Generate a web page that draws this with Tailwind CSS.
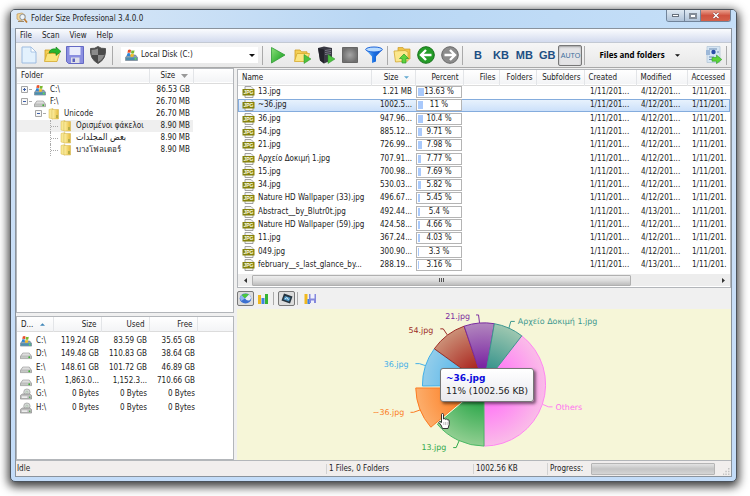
<!DOCTYPE html>
<html lang="en">
  <head>
    <meta charset="utf-8" />
<meta name="viewport" content="width=device-width, initial-scale=1" />
<title>Folder Size Professional 3.4.0.0</title>
<script src="https://cdn.jsdelivr.net/npm/@tailwindcss/browser@4"></script>
  </head>
  <body class="bg-white font-['DejaVu_Sans_Condensed','DejaVu_Sans','Noto_Sans',sans-serif] text-[8px] leading-[10px] text-[#222]">

<!-- shared icons -->
<svg class="absolute h-0 w-0" aria-hidden="true">
  <defs>
    <linearGradient id="gold" x1="0" x2="1"><stop offset="0" stop-color="#fff3a8"/><stop offset="1" stop-color="#e6bb3c"/></linearGradient>
    <linearGradient id="green" x1="0" y1="0" x2="1" y2="1"><stop offset="0" stop-color="#8be07a"/><stop offset="1" stop-color="#0d9a17"/></linearGradient>
    <linearGradient id="grey" x1="0" y1="0" x2="0" y2="1"><stop offset="0" stop-color="#f4f4f4"/><stop offset="1" stop-color="#999"/></linearGradient>
  </defs>
  <symbol id="i-folder" viewBox="0 0 12 12">
    <path d="M1 1.500l4-1v10.500l-4-1z" fill="#f8e793" stroke="#d9b94b" stroke-width=".5"/>
    <path d="M4 1.500h6.500v9.500H4z" fill="url(#gold)" stroke="#cfae45" stroke-width=".5"/>
    <path d="M8 7h2v3H8z" fill="#b7ae45"/>
  </symbol>
  <symbol id="i-drive" viewBox="0 0 13 12">
    <path d="M3 5h7l2.500 3.500v2.500H.5V8.500z" fill="url(#grey)" stroke="#8a8a8a" stroke-width=".7"/>
    <path d="M1 9h11v1.800H1z" fill="#c4c8c4"/><circle cx="10" cy="9.500" r="1" fill="#3fae34"/>
  </symbol>
  <symbol id="i-win" viewBox="0 0 13 12">
    <path d="M2.500 6h8l2 2.500v3H.5v-3z" fill="#8fa3b3" stroke="#5f7485" stroke-width=".6"/>
    <path d="M1 8.500h11v2.500H1z" fill="#4c8fae"/><circle cx="10.500" cy="9.800" r="1" fill="#5fe04c"/>
    <path d="M3 1q1.500-1 3 0L5.500 4q-1.500-.8-3 0z" fill="#e8502b"/><path d="M6.500 1.300q1.500.8 3 0L9 4.300q-1.500.8-3 0z" fill="#7ab82e"/>
    <path d="M2.300 4.500q1.500-.8 3 0L4.800 7.300q-1.500-.8-3 0z" fill="#2f86d6"/><path d="M5.900 4.800q1.500.8 3 0L8.400 7.600q-1.500.8-3 0z" fill="#f7be22"/>
  </symbol>
  <symbol id="i-dvd" viewBox="0 0 13 12">
    <circle cx="7.500" cy="4" r="3.500" fill="#d4d8d6" stroke="#8c8c8c" stroke-width=".6"/><circle cx="7.500" cy="4" r="1" fill="#fff" stroke="#7b9c7b" stroke-width=".5"/>
    <path d="M2.500 6h8l2 1.500v4H.5v-4z" fill="#bdbdbd" stroke="#777" stroke-width=".6"/><path d="M2 8.500h6v1.800H2z" fill="#eee"/><circle cx="10.500" cy="9.500" r=".8" fill="#4aa84a"/>
  </symbol>
  <symbol id="i-openfolder" viewBox="0 0 18 18">
    <path d="M2 15V4h5l1.500 1.800H14V8" fill="#f3cf55" stroke="#cf9c22" stroke-width=".8"/>
    <path d="M1.500 15.500L4 7.500h12.500l-2.500 8z" fill="#fbe57f" stroke="#d6a82c" stroke-width=".8"/>
  </symbol>
  <symbol id="i-plus" viewBox="0 0 9 9">
    <path d="M1.500 1.500h6v6h-6z" fill="#f7f7f7" stroke="#a5a5a5" stroke-width="1"/><path d="M3 4.500h3M4.500 3v3" stroke="#3d5fa8"/>
  </symbol>
  <symbol id="i-minus" viewBox="0 0 9 9">
    <path d="M1.500 1.500h6v6h-6z" fill="#f7f7f7" stroke="#a5a5a5" stroke-width="1"/><path d="M3 4.500h3" stroke="#3d5fa8"/>
  </symbol>
</svg>

<div class="h-screen pt-[9px] pr-[13px] pb-[14px] pl-[10px]">
<div class="flex h-full flex-col rounded-[5px] border border-[#4c535b] bg-[#bfdbf7] bg-linear-to-b from-[#cfe1f5] to-[#c3dcf8] px-1 pb-1 shadow-[0_3px_10px_2px_rgba(0,0,0,0.75)]">

  <!-- title bar -->
  <header class="-mx-1 flex h-[18px] items-start rounded-t-[4px] bg-linear-to-r from-[#dce9f7] via-[#b9d7f4] to-[#c5dff8] pr-[5px] pl-[5px]">
    <svg class="mt-[2px] h-3 w-3" viewBox="0 0 12 12"><path d="M1 2l5-1 3 2v4L4 9 1 7z" fill="#f2d79a" stroke="#b88a4a" stroke-width=".6"/><circle cx="6.500" cy="5" r="2.700" fill="#eef5fb" stroke="#87909a" stroke-width=".9"/><path d="M8.300 7l2.700 3.500" stroke="#c27a2c" stroke-width="1.600"/><path d="M2 9.500h6" stroke="#9c8a6c"/></svg>
    <h1 class="mt-1 ml-[3px] flex-1">Folder Size Professional 3.4.0.0</h1>
    <div class="flex h-[12px] overflow-hidden rounded-b-[3px] border border-t-0 border-[#71849a]">
      <button class="flex w-[17px] items-center justify-center bg-linear-to-b from-[#dfe9f3] to-[#b0c3d8]" aria-label="Minimize"><span class="block h-[3px] w-[7px] border border-[#66707c] bg-white"></span></button>
      <button class="flex w-[17px] items-center justify-center border-x border-[#71849a] bg-linear-to-b from-[#dfe9f3] to-[#b0c3d8]" aria-label="Maximize"><span class="block h-[6px] w-[8px] border-2 border-[#838c97] bg-white"></span></button>
      <button class="flex w-[29px] items-center justify-center bg-linear-to-b from-[#e9a291] via-[#cf5340] to-[#d4614a]" aria-label="Close"><svg class="h-[7px] w-2" viewBox="0 0 8 7"><path d="M1.500 1l5 5M6.500 1l-5 5" stroke="#733" stroke-width="2.400"/><path d="M1.500 1l5 5M6.500 1l-5 5" stroke="#fff" stroke-width="1.500"/></svg></button>
    </div>
  </header>

  <div class="flex min-h-0 flex-1 flex-col border border-[#8a939d] bg-[#f0f0f0]">
    <nav class="flex h-[13px] items-center gap-[10px] bg-linear-to-b from-[#fbfcfe] to-[#d3dbee] px-1">
      <a href="#">File</a><a href="#">Scan</a><a href="#">View</a><a href="#">Help</a>
    </nav>

    <!-- toolbar -->
    <div class="flex h-[26px] shrink-0 items-center border-y border-t-[#c3c9d3] border-b-[#a9a9a9] bg-linear-to-b from-[#f6f6f6] to-[#e8e8e8]">
      <div class="flex items-center gap-[5px] pl-1">
        <button aria-label="New"><svg class="h-[18px] w-[18px]" viewBox="0 0 18 18"><path d="M2 1h9l5 5v11H2z" fill="#e3f1fd" stroke="#9dbbe0" stroke-width="1"/><path d="M11 1v5h5z" fill="#fff" stroke="#9dbbe0" stroke-width=".8"/></svg></button>
        <button aria-label="Open"><svg class="h-[18px] w-[18px]" viewBox="0 0 18 18"><use href="#i-openfolder"/><path d="M6 7q1-5 7-4V1l5 4.500-5 4V7Q9 6 6 7z" fill="#27b52c" stroke="#11801a" stroke-width=".6"/></svg></button>
        <button aria-label="Save"><svg class="h-[18px] w-[18px]" viewBox="0 0 18 18"><path d="M.5.500h17v17h-15l-2-2z" fill="#8a8ee0" stroke="#6469c4"/><path d="M3.500 1h11v8h-11z" fill="#e9ecfb"/><path d="M5 11.500h8.500V17H5z" fill="#dfe0e8"/><path d="M6.500 12.500h2.500V16H6.500z" fill="#5b60be"/></svg></button>
        <button aria-label="Shield"><svg class="h-[18px] w-[18px]" viewBox="0 0 18 18"><path d="M9 .5Q12 3 16.500 2.500 17.500 13 9 17.500.500 13 1.500 2.500 6 3 9 .500z" fill="#4a4a4a" stroke="#555"/><path d="M9 2.500v6.500H2.800q-.5-2-.3-5.200Q6 4 9 2.500zM9 9h6.200q-1 4.500-6.200 7z" fill="#8b8b8b"/></svg></button>
      </div>
      <span class="mx-[5px] h-[19px] w-px bg-[#aaa]"></span>
      <div class="ml-[3px] flex h-4 w-[137px] items-center bg-white pl-1">
        <svg class="h-3 w-[13px]"><use href="#i-win"/></svg>
        <select class="ml-[3px] h-4 flex-1 appearance-none bg-transparent" aria-label="Drive"><option>Local Disk (C:)</option></select>
        <svg class="mr-[3px] h-[3px] w-[6px]" viewBox="0 0 6 3"><path d="M0 0h6L3 3z" fill="#111"/></svg>
      </div>
      <span class="ml-1 h-[19px] w-px bg-[#aaa]"></span>
      <div class="flex items-center gap-[6px] pl-[6px]">
        <button aria-label="Scan"><svg class="h-[18px] w-[18px]" viewBox="0 0 18 18"><path d="M2.500 1.500L16 9 2.500 17z" fill="url(#green)" stroke="#2f9a33" stroke-width=".8"/></svg></button>
        <button aria-label="Scan folder"><svg class="h-[18px] w-[18px]" viewBox="0 0 18 18"><use href="#i-openfolder"/><path d="M11 8.500l7 4.500-7 4.500z" fill="#4cc23e" stroke="#2c8f2c" stroke-width=".5"/></svg></button>
        <button aria-label="Scan computer"><svg class="h-[18px] w-[18px]" viewBox="0 0 18 18"><path d="M1 2l6-1.500L15 2v12l-8 3.500-4-3z" fill="#3a3a44"/><path d="M1 2l6 1.500v14l-4-3z" fill="#23232b"/><path d="M8 4.500l6-1M8 6.500l6-1M8 8.500l6-1" stroke="#8a8a98" stroke-width=".8"/><path d="M11 8.500l7 4.500-7 4.500z" fill="#4cc23e" stroke="#2c8f2c" stroke-width=".5"/></svg></button>
        <button aria-label="Stop"><svg class="h-[18px] w-[18px]" viewBox="0 0 18 18"><defs><radialGradient id="stop"><stop offset="0" stop-color="#a5a5a5"/><stop offset="1" stop-color="#707070"/></radialGradient></defs><path d="M1.500 1.500h15v15h-15z" fill="url(#stop)" stroke="#666"/></svg></button>
        <button aria-label="Filter"><svg class="h-[18px] w-[18px]" viewBox="0 0 18 18"><defs><linearGradient id="fun"><stop offset="0" stop-color="#7fc4ff"/><stop offset=".5" stop-color="#1a6fe0"/><stop offset="1" stop-color="#1450c4"/></linearGradient></defs><path d="M.5 3.500L7 10.500v6.500l4-1.500v-5l6.500-7z" fill="url(#fun)"/><ellipse cx="9" cy="3.500" rx="8.300" ry="2.500" fill="#b9dcff" stroke="#1a62d8"/></svg></button>
      </div>
      <span class="ml-1 h-[19px] w-px bg-[#aaa]"></span>
      <div class="flex items-center gap-[6px] pl-[5px]">
        <button aria-label="Up"><svg class="h-[18px] w-[18px]" viewBox="0 0 18 18"><path d="M5 1.500h5l1 1.500h6v10H5z" fill="#f0c448" stroke="#cc9c2a" stroke-width=".7"/><path d="M1 5l11-.5 3 1.500v9L2.500 16z" fill="#fbe78c" stroke="#d2a833" stroke-width=".8"/><path d="M11 8l4.500 4.500H13V17H9v-4.500H6.500z" fill="#5fd33c" stroke="#2c9a28" stroke-width=".7"/></svg></button>
        <button aria-label="Back"><svg class="h-[18px] w-[18px]" viewBox="0 0 18 18"><circle cx="9" cy="9" r="8.300" fill="#249c28" stroke="#137018"/><path d="M14.500 9H4.500M9 4L4 9l5 5" fill="none" stroke="#fff" stroke-width="2.400"/></svg></button>
        <button aria-label="Forward"><svg class="h-[18px] w-[18px]" viewBox="0 0 18 18"><circle cx="9" cy="9" r="8.300" fill="#8c8c8c" stroke="#666"/><path d="M3.500 9h10M9 4l5 5-5 5" fill="none" stroke="#fff" stroke-width="2.400"/></svg></button>
      </div>
      <span class="ml-[3px] h-[19px] w-px bg-[#aaa]"></span>
      <div class="ml-[11px] flex items-center font-['Liberation_Sans',sans-serif] text-[11px] font-bold text-[#1d4f83]">
        <button>B</button>
        <button class="ml-[11px]">KB</button>
        <button class="ml-[7px]">MB</button>
        <button class="ml-[6px]">GB</button>
        <button class="ml-[3px] flex h-[21px] w-6 items-center justify-center rounded-[2px] border border-[#777] bg-[#e4e4e6] pt-[2px] text-[7px] font-normal text-[#3b6d9c] shadow-[inset_0_1px_2px_rgba(0,0,0,0.3)]">AUTO</button>
      </div>
      <span class="ml-[2px] h-[19px] w-px bg-[#aaa]"></span>
      <button class="ml-[14px] flex items-center font-['Open_Sans',sans-serif] font-bold text-black">Files and folders<svg class="ml-[10px] h-[3px] w-[5px]" viewBox="0 0 6 3"><path d="M0 0h6L3 3z" fill="#111"/></svg></button>
      <button class="ml-auto" aria-label="Export"><svg class="h-[18px] w-[17px]" viewBox="0 0 17 18"><path d="M2 .500h13v16H2z" fill="#d5e5f3" stroke="#b5c8d8" stroke-width=".8"/><path d="M1 4h4v5H1z" fill="#9db8d8"/><circle cx="8.500" cy="6" r="2.200" fill="#2a4da8"/><path d="M4 3h8M12 6h2M4 11h5M4 13.500h4" stroke="#6d8db5"/><path d="M7 11.500h4.500V9l5.300 4.500-5.300 4.200v-2.500H7z" fill="#5cd43a" stroke="#2f9f26" stroke-width=".6"/></svg></button>
      <span class="mr-1 ml-1 h-[19px] w-px bg-[#aaa]"></span>
    </div>

    <div class="flex min-h-0 flex-1 gap-[3px]">
      <!-- left column -->
      <div class="flex w-[218px] shrink-0 flex-col gap-[3px]">
        <section class="min-h-0 flex-[246] overflow-hidden border border-[#b3b6ba] bg-white">
          <table class="w-full table-fixed">
            <colgroup><col class="w-[132px]"><col class="w-11"><col></colgroup>
            <thead>
              <tr class="h-[14px] border-b border-[#dcdcdc] bg-linear-to-b from-white to-[#f3f4f6] text-left">
                <th class="border-r border-[#e3e5e8] pl-1 font-normal">Folder</th>
                <th class="border-r border-[#e3e5e8] pl-[11px] font-normal"><span class="flex items-center gap-[6px]">Size<svg class="h-[4px] w-[7px]" viewBox="0 0 7 4"><path d="M0 0h7L3.500 4z" fill="#999"/></svg></span></th>
                <th></th>
              </tr>
            </thead>
            <tbody id="tree" class="text-right"></tbody>
          </table>
        </section>
        <section class="min-h-0 flex-[144] overflow-hidden border border-[#b3b6ba] bg-white">
          <table class="w-full table-fixed text-right">
            <colgroup><col class="w-9"><col class="w-12"><col class="w-12"><col class="w-12"><col></colgroup>
            <thead>
              <tr class="h-[15px] border-b border-[#dcdcdc] bg-linear-to-b from-white to-[#f3f4f6]">
                <th class="border-r border-[#e3e5e8] pt-px pl-1 text-left font-normal"><span class="flex items-center gap-[7px]">D...<svg class="h-[3px] w-[5px]" viewBox="0 0 6 3"><path d="M0 3h6L3 0z" fill="#3f86b8"/></svg></span></th>
                <th class="border-r border-[#e3e5e8] pt-px pr-1 font-normal">Size</th>
                <th class="border-r border-[#e3e5e8] pt-px pr-1 font-normal">Used</th>
                <th class="border-r border-[#e3e5e8] pt-px pr-1 font-normal">Free</th>
                <th></th>
              </tr>
            </thead>
          </table>
          <table class="mt-[2px] h-[80px] w-full table-fixed text-right">
            <colgroup><col class="w-9"><col class="w-12"><col class="w-12"><col class="w-12"><col></colgroup>
            <tbody id="drives"></tbody>
          </table>
        </section>
      </div>

      <!-- right column -->
      <div class="flex min-w-0 flex-1 flex-col pt-px">
        <section class="flex h-[219px] shrink-0 flex-col overflow-hidden border border-[#b3b6ba] bg-white">
          <table class="w-full table-fixed text-right">
            <colgroup><col class="w-[133px]"><col class="w-11"><col class="w-12"><col class="w-9"><col class="w-[37px]"><col class="w-12"><col class="w-[52px]"><col class="w-[51px]"><col></colgroup>
            <thead>
              <tr class="h-[15px] border-b border-[#dcdcdc] bg-linear-to-b from-white to-[#f3f4f6]">
                <th class="border-r border-[#e3e5e8] pt-px pl-1 text-left font-normal">Name</th>
                <th class="border-r border-[#e3e5e8] pt-px pr-[6px] font-normal"><span class="flex items-center justify-end gap-[5px]">Size<svg class="h-[3px] w-[5px]" viewBox="0 0 6 3"><path d="M0 0h6L3 3z" fill="#62a8d0"/></svg></span></th>
                <th class="border-r border-[#e3e5e8] pt-px pr-1 font-normal">Percent</th>
                <th class="border-r border-[#e3e5e8] pt-px pr-[3px] font-normal">Files</th>
                <th class="border-r border-[#e3e5e8] pt-px pr-[3px] font-normal">Folders</th>
                <th class="border-r border-[#e3e5e8] pt-px pr-[3px] font-normal">Subfolders</th>
                <th class="border-r border-[#e3e5e8] pt-px pl-1 text-left font-normal">Created</th>
                <th class="border-r border-[#e3e5e8] pt-px pl-1 text-left font-normal">Modified</th>
                <th class="pt-px pl-1 text-left font-normal">Accessed</th>
              </tr>
            </thead>
          </table>
          <table class="h-[186px] w-full table-fixed text-right">
            <colgroup><col class="w-[133px]"><col class="w-11"><col class="w-12"><col class="w-[121px]"><col class="w-[52px]"><col class="w-[51px]"><col></colgroup>
            <tbody id="files"></tbody>
          </table>
          <div class="mt-auto mb-px flex h-[12px] items-center bg-[#ededed]">
            <button class="flex w-[14px] justify-center" aria-label="Scroll left"><svg class="h-[5px] w-[3px]" viewBox="0 0 3 5"><path d="M3 0v5L0 2.500z" fill="#333"/></svg></button>
            <div class="flex h-[11px] w-[77%] items-center justify-center gap-px rounded-[1px] border border-[#b0b0b0] bg-linear-to-b from-[#eee] via-[#dcdcdc] to-[#bdbdbd]">
              <span class="h-1 w-px bg-[#555]"></span><span class="h-1 w-px bg-[#555]"></span><span class="h-1 w-px bg-[#555]"></span>
            </div>
            <button class="mr-[5px] ml-auto" aria-label="Scroll right"><svg class="h-[5px] w-[3px]" viewBox="0 0 3 5"><path d="M0 0v5l3-2.500z" fill="#333"/></svg></button>
          </div>
        </section>

        <!-- chart toolbar -->
        <div class="flex h-[21px] shrink-0 items-center">
          <button class="flex h-[15px] w-[17px] items-center justify-center rounded-[2px] border border-[#777] bg-[#dcdcdc]" aria-label="Pie chart"><svg class="h-[11px] w-[13px]" viewBox="0 0 13 11"><ellipse cx="6.500" cy="5.500" rx="5.800" ry="5" fill="#3b6fd0"/><path d="M6 5.500L2 2.300Q6-.500 10 1.500z" fill="#4ac83a"/><path d="M6 5.500L10 1.500q3.500 3 1 5.500-3 1.500-5-1.500z" fill="#e8eef8"/><path d="M1 5q0-2 1.500-3L6 5.500 2 8z" fill="#8fb4f0"/></svg></button>
          <button class="ml-[3px]" aria-label="Bar chart"><svg class="h-3 w-3" viewBox="0 0 12 12"><path d="M1 2h3v9H1z" fill="#f0b81e"/><path d="M4.500 5h3v6h-3z" fill="#3f82e0"/><path d="M8 1h3v10H8z" fill="#35b435"/></svg></button>
          <span class="ml-1 h-[13px] w-px bg-[#aaa]"></span>
          <button class="ml-1 flex h-[15px] w-[17px] items-center justify-center rounded-[2px] border border-[#777] bg-[#dcdcdc]" aria-label="3D"><svg class="h-[11px] w-[12px]" viewBox="0 0 12 11"><path d="M3 .5l8.500 3-2.500 7-8.500-3z" fill="#26343f"/><path d="M4 3l5.500 1.800L8 8.500 2.500 6.500z" fill="#4a95c4"/><path d="M4 6l2-1.500L7.500 7" fill="none" stroke="#cfe8f5"/></svg></button>
          <span class="ml-[2px] h-[13px] w-px bg-[#aaa]"></span>
          <button class="ml-[6px]" aria-label="Save chart"><svg class="h-3 w-3" viewBox="0 0 12 12"><path d="M.5 1h3v10h-3z" fill="#f0b81e"/><path d="M3.500 6h2.500v5H3.500z" fill="#3f82e0"/><path d="M5 1h7v9H5z" fill="#8488dc"/><path d="M6.500 1h4v4.500h-4zM7 7.500h3V10H7z" fill="#f0f1fb"/></svg></button>
        </div>

        <div class="relative min-h-0 flex-1 overflow-hidden bg-[#f6f6d8]">
          <svg class="h-full w-full font-['DejaVu_Sans',sans-serif] text-[8px]" viewBox="238 309 492 152">
            <defs>
              <radialGradient id="g-oth" gradientUnits="userSpaceOnUse" cx="484" cy="385" r="62"><stop offset=".35" stop-color="#ff7df5"/><stop offset="1" stop-color="#fabce8"/></radialGradient>
              <radialGradient id="g-13" gradientUnits="userSpaceOnUse" cx="484" cy="385" r="62"><stop offset=".3" stop-color="#2fa84c"/><stop offset="1" stop-color="#92cf92"/></radialGradient>
              <radialGradient id="g-s36" gradientUnits="userSpaceOnUse" cx="477" cy="388" r="62"><stop offset=".3" stop-color="#fd7a1e"/><stop offset="1" stop-color="#fcae6c"/></radialGradient>
              <radialGradient id="g-36" gradientUnits="userSpaceOnUse" cx="484" cy="385" r="62"><stop offset=".3" stop-color="#4db3ea"/><stop offset="1" stop-color="#93cdea"/></radialGradient>
              <radialGradient id="g-54" gradientUnits="userSpaceOnUse" cx="484" cy="385" r="62"><stop offset=".3" stop-color="#ab2821"/><stop offset="1" stop-color="#cb9077"/></radialGradient>
              <radialGradient id="g-21" gradientUnits="userSpaceOnUse" cx="484" cy="385" r="62"><stop offset=".3" stop-color="#7b26a3"/><stop offset="1" stop-color="#b287be"/></radialGradient>
              <radialGradient id="g-gr" gradientUnits="userSpaceOnUse" cx="484" cy="385" r="62"><stop offset=".3" stop-color="#3c968e"/><stop offset="1" stop-color="#9dc7b0"/></radialGradient>
            </defs>
            <path d="M484 385L522 336A62 62 0 0 1 484 447z" fill="url(#g-oth)" stroke="#ff85f2"/>
            <path d="M484 385V447A62 62 0 0 1 437 425z" fill="url(#g-13)" stroke="#4cb865"/>
            <path d="M484 386L422 386.500A62 62 0 0 1 434 349z" fill="url(#g-36)" stroke="#41aee8"/>
            <path d="M484 385L434 349A62 62 0 0 1 464 326.300z" fill="url(#g-54)" stroke="#9c2b24"/>
            <path d="M484 385L464 326.300A62 62 0 0 1 494.400 323.800z" fill="url(#g-21)" stroke="#7a2b9f"/>
            <path d="M484 385L494.400 323.800A62 62 0 0 1 522 336z" fill="url(#g-gr)" stroke="#3c968e"/>
            <path d="M477.500 388.500H415.300A62 62 0 0 0 430.500 428z" fill="url(#g-s36)" stroke="#fb7b22"/>
            <g fill="none">
              <path d="M415 364h4l6 2" stroke="#41aee8"/><path d="M440 329h3l4 6" stroke="#9c2b24"/><path d="M476 315h2.500l1 8" stroke="#7a2b9f"/>
              <path d="M515 321.500h-4l-2 7" stroke="#3c968e"/><path d="M543 405l6 2.500h4" stroke="#ff85f2"/><path d="M410 413h3l7-2.500" stroke="#fb7b22"/><path d="M453 448.500h3l3-7" stroke="#2fa84c"/>
            </g>
            <text x="445" y="319" fill="#7a2b9f">21.jpg</text>
            <text x="408" y="333" fill="#9c2b24">54.jpg</text>
            <text x="383" y="367" fill="#41aee8">36.jpg</text>
            <text x="372" y="416" fill="#fb7b22">~36.jpg</text>
            <text x="421" y="451" fill="#2fa84c">13.jpg</text>
            <text x="518" y="324" fill="#3c968e">Αρχείο Δοκιμή 1.jpg</text>
            <text x="556" y="411" fill="#ff70f0">Others</text>
          </svg>
          <div role="tooltip" class="absolute top-[59px] left-[203px] rounded-[3px] border border-[#767676] bg-linear-to-b from-white to-[#e9e9ee] px-[5px] py-[3px] font-['DejaVu_Sans',sans-serif] text-[9px] leading-[13px] whitespace-nowrap shadow-[2px_2px_3px_rgba(0,0,0,0.5)]">
            <b class="block text-[#0b0bdc]">~36.jpg</b>
            11% (1002.56 KB)
          </div>
          <svg class="absolute top-[104px] left-[201px] h-4 w-3" viewBox="0 0 12 16"><path d="M3.500 9.500V1.500q0-1 1-1t1 1V6q1.500-.8 2 .3 1.200-.6 1.800.4 1.700-.4 1.900 1.300v3.500L10 15.500H4.500L3 12 .7 9.300Q1 7.500 3.500 9.500z" fill="#fff" stroke="#222" stroke-width=".9"/><path d="M5.800 9v3M7.500 9v3M9.200 9v3" stroke="#888" stroke-width=".5"/></svg>
        </div>
      </div>
    </div>

    <!-- status bar -->
    <footer class="grid h-[16px] shrink-0 grid-cols-[310fr_147fr_74fr_184fr] items-center border-t border-[#b3b6ba] bg-[#f1eeed]">
      <span class="pl-px">Idle</span>
      <span class="border-l border-[#d2d2d2] pl-[2px]">1 Files, 0 Folders</span>
      <span class="border-l border-[#d2d2d2] pl-[2px]">1002.56 KB</span>
      <span class="flex items-center border-l border-[#d2d2d2] pl-[2px]">Progress:
        <span role="progressbar" aria-label="Progress" class="ml-2 h-3 flex-1 rounded-[1px] border border-[#b5b5b5] bg-linear-to-b from-[#e3e3e3] via-[#c4c4c4] to-[#d5d5d5]"></span>
        <svg class="mr-px ml-2 h-[7px] w-[7px] self-end" viewBox="0 0 7 7"><path d="M5 0h1.500v1.500H5zM5 2.700h1.500v1.500H5zM5 5.400h1.500v1.500H5zM2.300 2.700h1.500v1.500H2.300zM2.300 5.400h1.500v1.500H2.300zM0 5.400h1.200v1.500H0z" fill="#c2c2c2"/></svg>
      </span>
    </footer>
  </div>
</div>
</div>

<script>
const tree = [
  ['C:\\', '86.53 GB', 'win', 0, 'plus'],
  ['F:\\', '26.70 MB', 'drive', 0, 'minus'],
  ['Unicode', '26.70 MB', 'folder', 1, 'minus'],
  ['Ορισμένοι φάκελοι', '8.90 MB', 'folder', 2, ''],
  ['<span class="text-[9px]">بعض المجلدات</span>', '8.90 MB', 'folder', 2, ''],
  ['บางโฟลเดอร์', '8.90 MB', 'folder', 2, '']
]
const drives = [
  ['C:\\', '119.24 GB', '83.59 GB', '35.65 GB', 'win'],
  ['D:\\', '149.48 GB', '110.83 GB', '38.64 GB', 'drive'],
  ['E:\\', '148.61 GB', '101.72 GB', '46.89 GB', 'drive'],
  ['F:\\', '1,863.0...', '1,152.3...', '710.66 GB', 'drive'],
  ['G:\\', '0 Bytes', '0 Bytes', '0 Bytes', 'dvd'],
  ['H:\\', '0 Bytes', '0 Bytes', '0 Bytes', 'dvd']
]
const files = [
  ['13.jpg', '1.21 MB', 13.63, '12'],
  ['~36.jpg', '1002.5...', 11, '12'],
  ['36.jpg', '947.96...', 10.4, '12'],
  ['54.jpg', '885.12...', 9.71, '12'],
  ['21.jpg', '726.99...', 7.98, '12'],
  ['Αρχείο Δοκιμή 1.jpg', '707.91...', 7.77, '12'],
  ['15.jpg', '700.98...', 7.69, '12'],
  ['34.jpg', '530.03...', 5.82, '12'],
  ['Nature HD Wallpaper (33).jpg', '496.67...', 5.45, '12'],
  ['Abstract__by_Blutr0t.jpg', '492.44...', 5.4, '13'],
  ['Nature HD Wallpaper (59).jpg', '424.58...', 4.66, '12'],
  ['11.jpg', '367.24...', 4.03, '12'],
  ['049.jpg', '300.90...', 3.3, '12'],
  ['february__s_last_glance_by...', '288.19...', 3.16, '13']
]

const indent = ['pl-[3px]', 'pl-[17px]', 'pl-[33px]']

const jpgIcon = `
  <svg class="h-3 w-[13px] shrink-0" viewBox="0 0 13 12">
    <path d="M3 .5h6l2 2v9H3z" fill="#f3f3f3" stroke="#999" stroke-width=".9"/>
    <path d="M.5 3h12v6.500H.5z" fill="#85820c"/>
    <text x="6.500" y="8" text-anchor="middle" font-family="Liberation Sans, sans-serif" font-weight="bold" font-size="5" fill="#fffde0">JPG</text>
  </svg>`

document.getElementById('tree').innerHTML = tree.map(([name, size, icon, level, box], i) => `
  <tr class="h-3 ${i === 3 ? 'bg-[#efefef]' : ''}">
    <td class="${indent[level]}">
      <span class="flex h-3 items-center">
        ${box ? `<svg class="h-[9px] w-[9px]"><use href="#i-${box}"/></svg><span class="mr-[3px] w-[2px] border-t border-dotted border-[#aaa]"></span>`
              : `<span class="h-3 w-2 border-l border-dotted border-[#aaa] pt-[6px]"><span class="block border-t border-dotted border-[#aaa]"></span></span><span class="w-[2px]"></span>`}
        <svg class="h-3 w-3 shrink-0"><use href="#i-${icon}"/></svg>
        <span class="ml-1 whitespace-nowrap">${name}</span>
      </span>
    </td>
    <td class="pr-[3px] whitespace-nowrap">${size}</td>
    <td class="bg-white"></td>
  </tr>`).join('')

document.getElementById('drives').innerHTML = drives.map(([name, size, used, free, icon]) => `
  <tr>
    <td class="pl-[3px]"><span class="flex items-center gap-1"><svg class="h-3 w-3 shrink-0"><use href="#i-${icon}"/></svg>${name}</span></td>
    <td class="pr-[2px] whitespace-nowrap">${size}</td>
    <td class="pr-[2px] whitespace-nowrap">${used}</td>
    <td class="pr-[2px] whitespace-nowrap">${free}</td>
    <td></td>
  </tr>`).join('')

document.getElementById('files').innerHTML = files.map(([name, size, percent, day], i) => `
  <tr class="${i === 1 ? 'bg-linear-to-b from-[#eaf3fd] to-[#c9dffa] outline outline-[#84acdd] -outline-offset-1' : ''}">
    <td class="pl-1"><span class="flex items-center gap-[3px] whitespace-nowrap">${jpgIcon}${name}</span></td>
    <td class="pr-[3px] whitespace-nowrap">${size}</td>
    <td class="px-px">
      <div class="relative h-3 border border-[#b4b4b4] bg-white text-center">
        <div class="absolute inset-y-px left-px bg-[#a9c9fb]" style="width: ${percent}%"></div>
        <span class="relative">${percent} %</span>
      </div>
    </td>
    <td></td>
    <td class="pl-[6px] text-left whitespace-nowrap">1/11/201...</td>
    <td class="pl-[5px] text-left whitespace-nowrap">4/${day}/201...</td>
    <td class="pl-[5px] text-left whitespace-nowrap">1/11/201.</td>
  </tr>`).join('')
</script>
  </body>
</html>
